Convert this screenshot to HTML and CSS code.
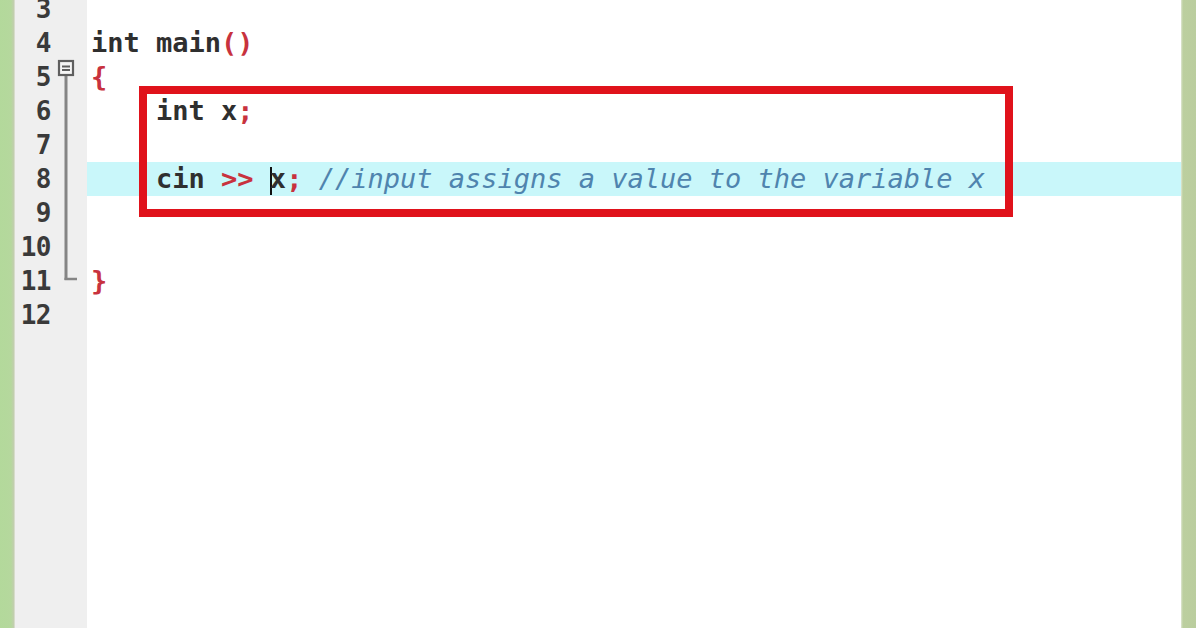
FILE: index.html
```html
<!DOCTYPE html>
<html>
<head>
<meta charset="utf-8">
<link rel="stylesheet" href="styles.css">
</head>
<body>
<div class="window">
  <div class="bar bar-left"></div>
  <div class="editor">
    <div class="gutter">
      <div class="numbers">
        <div class="num">3</div>
        <div class="num">4</div>
        <div class="num">5</div>
        <div class="num">6</div>
        <div class="num">7</div>
        <div class="num">8</div>
        <div class="num">9</div>
        <div class="num">10</div>
        <div class="num">11</div>
        <div class="num">12</div>
      </div>
      <div class="folds">
        <svg class="fold-svg" width="36" height="300" viewBox="0 0 36 300">
          <line x1="15" y1="82" x2="15" y2="288" stroke="#858585" stroke-width="3"/>
          <line x1="13.5" y1="287" x2="26" y2="287" stroke="#858585" stroke-width="2.5"/>
          <rect x="8" y="69" width="14" height="14" fill="#f6f6f6" stroke="#5f5f5f" stroke-width="2.2"/>
          <line x1="11" y1="74.5" x2="19" y2="74.5" stroke="#5f5f5f" stroke-width="2"/>
          <line x1="11" y1="78" x2="19" y2="78" stroke="#5f5f5f" stroke-width="2"/>
        </svg>
      </div>
    </div>
    <div class="code">
      <div class="lines">
        <div class="line"></div>
        <div class="line"><span class="kw">int</span> <span class="id">main</span><span class="op">()</span></div>
        <div class="line"><span class="op">{</span></div>
        <div class="line">    <span class="kw">int</span> <span class="id">x</span><span class="op">;</span></div>
        <div class="line"></div>
        <div class="line current">    <span class="id">cin</span> <span class="op">&gt;&gt;</span> <span class="caret"></span><span class="id">x</span><span class="op">;</span> <span class="cm">//input assigns a value to the variable x</span></div>
        <div class="line"></div>
        <div class="line"></div>
        <div class="line"><span class="op">}</span></div>
        <div class="line"></div>
      </div>
      <div class="annotation"></div>
    </div>
  </div>
  <div class="bar bar-right"></div>
</div>
</body>
</html>
```

FILE: styles.css
```css
* { box-sizing: border-box; }
html, body { margin: 0; padding: 0; }
body {
  width: 1196px;
  height: 628px;
  overflow: hidden;
  background: #ffffff;
  font-family: "DejaVu Sans Mono", "Liberation Mono", monospace;
}
.window {
  display: flex;
  width: 1196px;
  height: 628px;
}
.bar {
  width: 15px;
  flex: 0 0 15px;
}
.bar-left {
  background: linear-gradient(to right, #b3d99b 0, #b5d89d 11px, #c3cdb0 14px, #e9ece4 15px);
}
.bar-right {
  background: linear-gradient(to right, #dfe7d2 0, #bccf9f 2px, #bacd9e 100%);
}
.editor {
  flex: 1;
  display: flex;
  height: 100%;
}
.gutter {
  width: 72px;
  flex: 0 0 72px;
  background: #efefef;
  display: flex;
}
.numbers {
  width: 36px;
  margin-top: -8px;
}
.num {
  height: 34px;
  line-height: 34px;
  text-align: right;
  font-size: 26px;
  font-weight: bold;
  color: #3a3a3a;
  letter-spacing: -0.5px;
}
.folds {
  width: 36px;
  margin-top: -8px;
}
.fold-svg {
  display: block;
}
.code {
  flex: 1;
  position: relative;
  background: #ffffff;
}
.lines {
  margin-top: -8px;
}
.line {
  height: 34px;
  line-height: 34px;
  padding-left: 4px;
  font-size: 27px;
  white-space: pre;
  color: #2b2b2b;
}
.line.current {
  background: #c9f7fa;
}
.kw, .id {
  font-weight: bold;
  color: #2f2f2f;
}
.op {
  font-weight: bold;
  color: #c8323e;
}
.cm {
  font-style: italic;
  color: #4f84ae;
}
.caret {
  display: inline-block;
  width: 2px;
  height: 28px;
  margin-right: -2px;
  vertical-align: -7px;
  background: #111;
}
.annotation {
  position: absolute;
  left: 52px;
  top: 86px;
  width: 874px;
  height: 131px;
  border: 8px solid #e0121b;
}
```
